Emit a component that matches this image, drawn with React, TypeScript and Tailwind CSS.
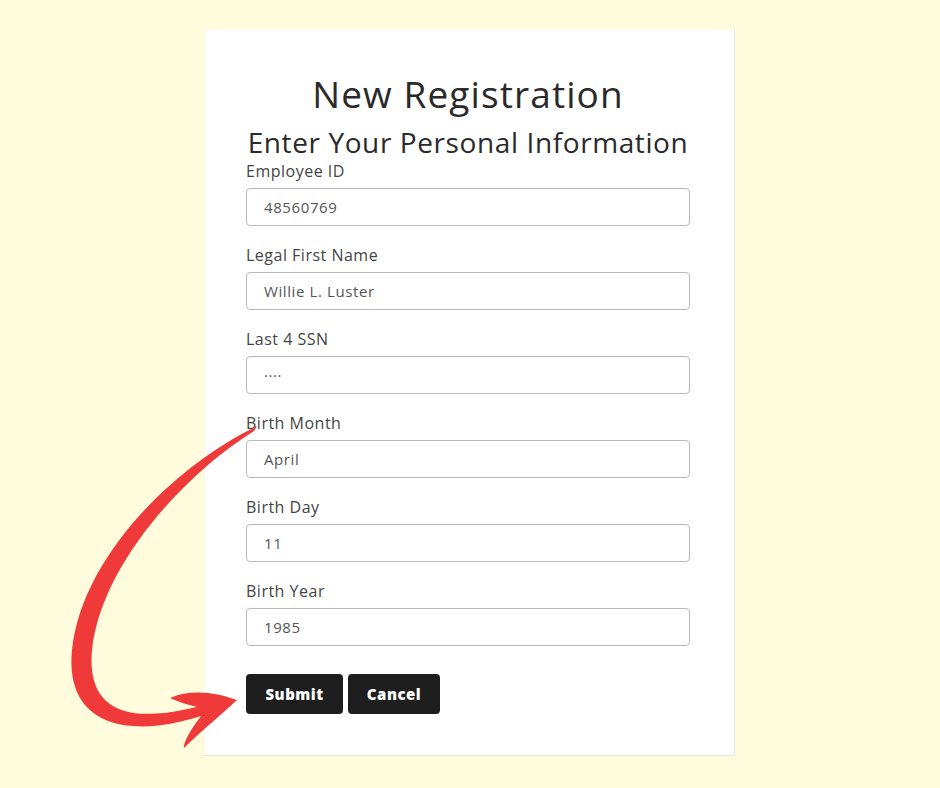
import React from 'react';

const FIELDS = [
  { label: 'Employee ID', value: '48560769' },
  { label: 'Legal First Name', value: 'Willie L. Luster' },
  { label: 'Last 4 SSN', value: '····' },
  { label: 'Birth Month', value: 'April' },
  { label: 'Birth Day', value: '11' },
  { label: 'Birth Year', value: '1985' },
];

const FONT = { fontFamily: '"Open Sans", "Noto Sans", sans-serif' };

const BTN =
  'h-[40px] rounded-[4px] bg-[#1e1e1e] text-[15px] font-extrabold text-white tracking-[0.5px]';

function CurvedArrow() {
  return (
    <svg
      className="pointer-events-none absolute left-0 top-0"
      width="940"
      height="788"
      viewBox="0 0 940 788"
    >
      {/* tapered body */}
      <path
        d="M257 426 C175 466 82 556 72 650 C64 730 135 744 226 707 L224 699 C135 728 86 716 92 650 C101 566 182 476 254 431 Z"
        fill="#f03a3a"
      />
      {/* head */}
      <path
        d="M170 698 C190 689 215 692 237 700 C220 716 200 732 184 748 C183 742 194 724 206 710 C196 706 182 704 170 698 Z"
        fill="#f03a3a"
      />
    </svg>
  );
}

export default function App() {
  return (
    <div className="relative h-[788px] w-[940px] overflow-hidden bg-[#fefcdc]" style={FONT}>
      <div className="pl-[205px] pt-[30px]">
        <div className="flex h-[726px] w-[530px] flex-col border-b border-r border-[#e6e6e0] bg-white pl-[41px]">
          <h1 className="mt-[42px] w-[444px] text-center text-[37px] leading-[44px] tracking-[1.1px] text-[#2a2a2a]">
            New Registration
          </h1>
          <h2 className="mt-[11px] w-[444px] text-center text-[28px] leading-[30px] tracking-[0.6px] text-[#2a2a2a]">
            Enter Your Personal Information
          </h2>
          <div className="mt-[4px] flex flex-col">
            {FIELDS.map((f) => (
              <div key={f.label} className="flex flex-col pb-[19px]">
                <label className="text-[16px] leading-[20px] tracking-[0.5px] text-[#444]">
                  {f.label}
                </label>
                <div className="mt-[7px] flex h-[38px] w-[444px] items-center rounded-[4px] border border-[#b9b9b9] px-[17px] text-[15px] tracking-[0.6px] text-[#555]">
                  {f.value}
                </div>
              </div>
            ))}
          </div>
          <div className="mt-[9px] flex gap-[5px]">
            <button type="button" className={`${BTN} w-[97px]`}>
              Submit
            </button>
            <button type="button" className={`${BTN} w-[92px]`}>
              Cancel
            </button>
          </div>
        </div>
      </div>
      <CurvedArrow />
    </div>
  );
}
